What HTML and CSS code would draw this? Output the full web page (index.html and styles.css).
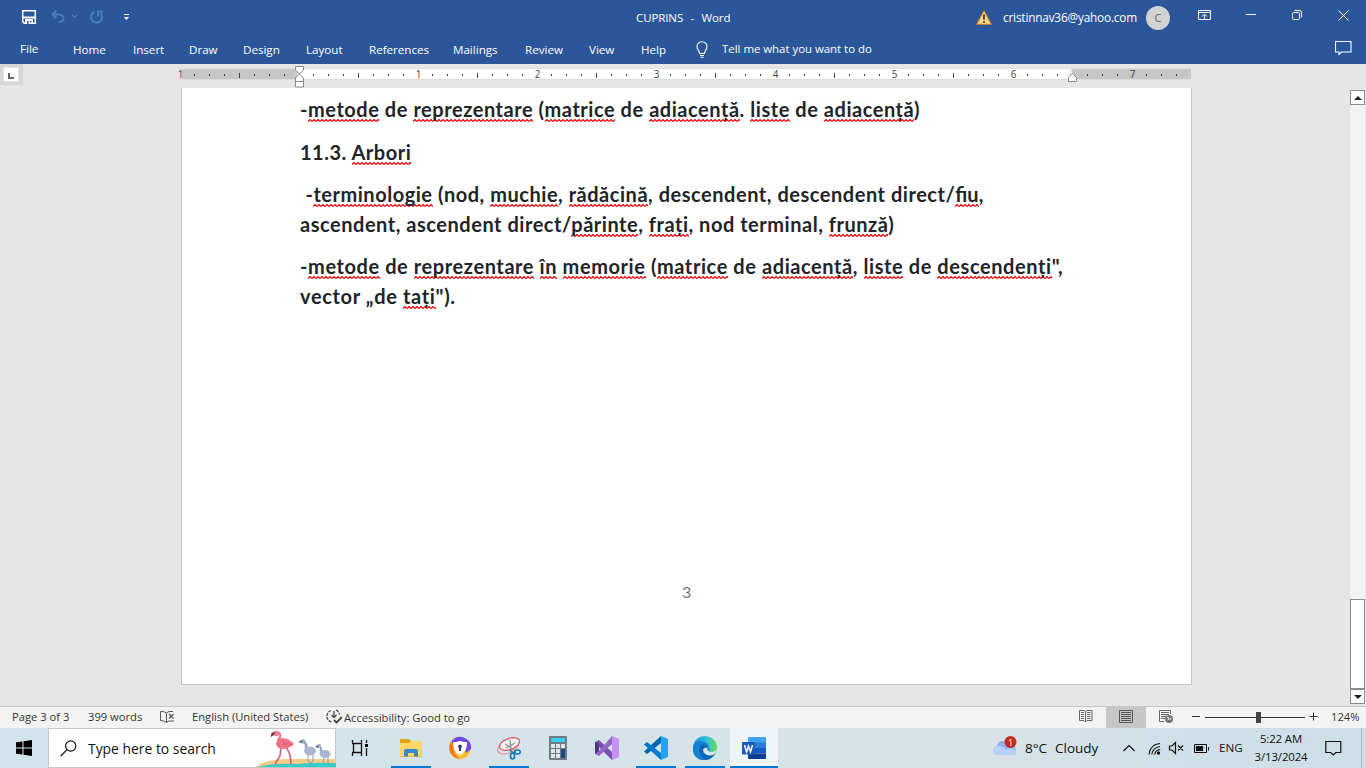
FILE: index.html
```html
<!DOCTYPE html>
<html lang="en">
<head>
<meta charset="utf-8">
<title>CUPRINS - Word</title>
<link rel="stylesheet" href="styles.css">
</head>
<body>
<div class="screen">
<header class="titlebar">
  <div class="quick">
    <svg width="116" height="20" viewBox="20 7 116 20" fill="none">
      <path d="M22.700 10.700h12.600v12.600H24.300l-1.600-1.600z" stroke="#fff" stroke-width="1.500"/><path d="M23 17.500h12" stroke="#fff" stroke-width="2"/><path d="M25 19h8v5h-8z" fill="#fff"/><path d="M27 21h1.500v3h-1.500zM30 21h1.500v1.500H30z" fill="#2b579a"/>
      <path d="M56.500 10.500l-4 4 4 4M52.500 14.500h6.500c6 0 6 7.500-.5 7.500" stroke="#4d7bb9" stroke-width="2"/>
      <path d="M72 15l2.500 2.500L77 15" stroke="#4d7bb9" stroke-width="1.200"/>
      <path d="M94.500 11.800a5.600 5.600 0 1 0 5.800 1M103 11.500h-5v5" stroke="#4d7bb9" stroke-width="2"/>
      <path d="M124 14.500h5" stroke="#fff"/><path d="M124 17h5l-2.500 3z" fill="#fff"/>
    </svg>
  </div>
  <div class="caption">CUPRINS&nbsp; -&nbsp; Word</div>
  <div class="account">
    <svg width="16" height="15" viewBox="0 0 16 15"><path d="M8 .5L15.300 14.300H.7z" fill="#fbd58b" stroke="#d9781e"/><path d="M8 4.500v5M8 11v1.700" stroke="#222" stroke-width="1.600"/></svg>
    <span class="mail">cristinnav36@yahoo.com</span>
    <span class="avatar">C</span>
  </div>
  <svg class="wincontrols" width="160" height="20" viewBox="1196 6 160 20" fill="none" stroke="#fff">
    <path d="M1198.500 10.500h12v9h-12zM1198.500 12.500h12M1204.500 19v-4M1202 16.500l2.500-2.500 2.500 2.500"/>
    <path d="M1246 14.500h10"/>
    <path d="M1292.500 13.500q0-1 1-1h5q1 0 1 1v5q0 1-1 1h-5q-1 0-1-1zM1294.500 10.500h5q2 0 2 2v5"/>
    <path d="M1338.500 10.500l10 10M1348.500 10.500l-10 10"/>
  </svg>
</header>
<nav class="ribbon">
  <span class="file">File</span><span>Home</span><span>Insert</span><span>Draw</span><span>Design</span><span>Layout</span><span>References</span><span>Mailings</span><span>Review</span><span>View</span><span>Help</span>
  <svg width="12" height="17" viewBox="0 0 12 17" fill="none" stroke="#fff" stroke-width="1.100"><path d="M3.500 12.500c0-3-2.500-3.500-2.500-7a5 4.700 0 0 1 10 0c0 3.500-2.500 4-2.500 7zM4 14.500h4M4.500 16.300h3"/></svg>
  <span class="tell">Tell me what you want to do</span>
  <svg class="comment" width="17" height="16" viewBox="0 0 17 16" fill="none" stroke="#fff" stroke-width="1.100"><path d="M.5 .5h15.500v10.500H6.500L4 13.500V11H.5z"/></svg>
</nav>
<main class="work">
  <div class="tabcorner"><span><svg width="6" height="6" viewBox="0 0 6 6"><path d="M1 0v5h5" fill="none" stroke="#666" stroke-width="2"/></svg></span></div>
  <div class="canvas">
    <svg class="ruler" width="1014" height="24" viewBox="178 64 1014 24">
      <path d="M182 69h115v10H182z" fill="#c6c6c6"/><path d="M1072 69h119v10h-119z" fill="#c6c6c6"/><path d="M299 69h771v10H299z" fill="#fff"/>
      <path d="M180 68.500h1011" stroke="#dedede"/><path d="M180 79.500h1011" stroke="#dcdcdc"/>
      <path d="M194.400 75h983" stroke="#444" stroke-width="2" stroke-dasharray="1 13.875" shape-rendering="crispEdges"/>
      <path d="M412 70h12v8h-12zM531 70h12v8h-12zM650 70h12v8h-12zM769 70h12v8h-12zM888 70h12v8h-12zM1007 70h12v8h-12z" fill="#fff"/><path d="M1126 70h12v8h-12z" fill="#c6c6c6"/>
      <path d="M239.500 73v5M358.500 73v5M477.500 73v5M596.500 73v5M715.500 73v5M834.500 73v5M953.500 73v5" stroke="#444"/>
      <g class="nums"><text x="180.500" y="78">1</text><text x="418.500" y="78">1</text><text x="537.500" y="78">2</text><text x="656.500" y="78">3</text><text x="775.500" y="78">4</text><text x="894.500" y="78">5</text><text x="1013.500" y="78">6</text><text x="1132.500" y="78">7</text></g>
      <path d="M295.500 66.500h8v3.500l-4 4 4 4v9h-8v-9l4-4-4-4zM295.500 81.500h8" fill="#fff" stroke="#8a8a8a"/>
      <path d="M1068.500 81.500v-4l4-4 4 4v4z" fill="#fff" stroke="#8a8a8a"/>
    </svg>
    <article class="page">
      <p class="l1">-<u>metode</u> de <u>reprezentare</u> (<u>matrice</u> de <u>adiacență</u>. <u>liste</u> de <u>adiacență</u>)</p>
      <p class="l2">11.3. <u>Arbori</u></p>
      <p><span class="l3">&nbsp;-<u>terminologie</u> (nod, <u>muchie</u>, <u>rădăcină</u>, descendent, descendent direct/<u class="lig">fiu</u>,</span><span class="l4">ascendent, ascendent direct/<u>părinte</u>, <u>frați</u>, nod terminal, <u>frunză</u>)</span></p>
      <p><span class="l5">-<u>metode</u> de <u>reprezentare</u> <u>în</u> <u>memorie</u> (<u>matrice</u> de <u>adiacență</u>, <u>liste</u> de <u>descendenți</u>",</span><span class="l6">vector „de <u>tați</u>").</span></p>
      <div class="pageno">3</div>
    </article>
  </div>
  <div class="scroll">
    <div class="sbtn"><svg width="8" height="4"><path d="M0 4h8L4 0z" fill="#222"/></svg></div>
    <div class="track"></div>
    <div class="thumb"></div>
    <div class="sbtn"><svg width="8" height="4"><path d="M0 0h8L4 4z" fill="#222"/></svg></div>
  </div>
</main>
<footer class="status">
  <span class="pg">Page 3 of 3</span><span class="wc">399 words</span>
  <svg width="16" height="14" viewBox="0 0 16 14" fill="none" stroke="#555"><path d="M6.500 3v9.500M6.500 3Q4 1 .5 1.500v9Q4 10.500 6.500 12.500 8 11 10 11M6.500 3Q8 1.500 10 1.500H13M10 11h4"/><path d="M9 4l4.500 4.500M13.500 4L9 8.500" stroke-width="1.300"/></svg>
  <span class="lang">English (United States)</span>
  <svg width="17" height="15" viewBox="0 0 17 15" fill="none" stroke="#444" stroke-width="1.300"><path d="M5 1.500A6 6 0 0 0 5.500 13M10 1a6 6 0 0 1 3.500 4.500" stroke-dasharray="3 1"/><path d="M8 2v6M5.500 6L8 8.500 10.500 6"/><path d="M8 11l2.500 2.500L16 8" stroke-width="1.800"/></svg>
  <span class="acc">Accessibility: Good to go</span>
  <svg class="read" width="14" height="13" viewBox="0 0 14 13" fill="none" stroke="#666"><path d="M.5 .5H5l1.500 1L8 .5h5v10H8L6.500 12 5 10.500H.5zM6.500 2v10M2 2.500h3M2 4.500h3M2 6.500h3M2 8.500h3M8 2.500h3.500M8 4.500h3.500M8 6.500h3.500M8 8.500h3.500"/></svg>
  <span class="layoutbtn"><svg width="14" height="13" viewBox="0 0 14 13" fill="none" stroke="#555"><path d="M.5.5h13v12H.5zM2 2.500h10M2 4.500h10M2 6.500h10M2 8.500h10M2 10.500h10"/></svg></span>
  <svg class="web" width="15" height="14" viewBox="0 0 15 14" fill="none" stroke="#666"><path d="M11.500 4V.5H.5v11H5M2 2.500h8M2 4.500h8M2 6.500h5M2 8.500h4"/><circle cx="10" cy="9" r="4" fill="#777" stroke="none"/><path d="M8 7l2 1-1 2M11 10l1-2" stroke="#eee"/></svg>
  <svg class="zoom" width="128" height="14" viewBox="1191 710 128 14"><path d="M1192 716.500h8M1309.500 716.500h8M1313.500 712.500v8M1205 717.500h100" stroke="#333"/><path d="M1256 712h5v11h-5z" fill="#444"/></svg>
  <span class="pct">124%</span>
</footer>
<div class="taskbar">
  <div class="start"><svg width="16" height="16" viewBox="0 0 16 16"><path d="M0 2.300l6.500-.9v6.100H0zM7.500 1.200L16 0v7.500H7.500zM0 8.500h6.500v6.100L0 13.700zM7.500 8.500H16V16l-8.500-1.200z"/></svg></div>
  <div class="search">
    <svg width="17" height="17" viewBox="0 0 17 17" fill="none" stroke="#111" stroke-width="1.200"><circle cx="10.700" cy="6" r="5.100"/><path d="M7 9.700L.8 16"/></svg>
    <span>Type here to search</span>
    <svg class="birds" width="80" height="37" viewBox="256 730 80 37" fill="none">
      <path d="M256 767q8-8 35-8h45v8z" fill="#f6cc86"/><path d="M258 767q15-4 40-3 14-2 38-1v4z" fill="#36cdc9"/>
      <path d="M281 747l-1 9-5 8M286 746l4 9 1 9" stroke="#dc5576" stroke-width="1.500"/>
      <path d="M276 733q5-1 4 4-3 4-1 8" stroke="#ef7c91" stroke-width="2.500"/><path d="M276 744q1-6 7-6 7 1 11 6-5 5-11 5-6 0-7-5z" fill="#ef7488"/><path d="M283 744q6-1 10 1" stroke="#dc5576"/><circle cx="276" cy="733.500" r="2.800" fill="#f47f94"/><path d="M275 732q-5 0-4 5l3-2z" fill="#654152"/>
      <path d="M308 753v8l3 2M313 753v8l-3 3M324 757l-1 6M328 757v7" stroke="#8e9ab6"/><path d="M303 741q4 2 3 8" stroke="#919fbe" stroke-width="2.500"/><ellipse cx="310" cy="751" rx="6" ry="4.500" fill="#aab5cf"/><circle cx="303" cy="741.500" r="2.300" fill="#9daac6"/><path d="M302 740l-4 2 4 1z" fill="#56647f"/>
      <path d="M319 746q3 2 2 7" stroke="#919fbe" stroke-width="2"/><ellipse cx="325" cy="754" rx="5.500" ry="4" fill="#aab5cf"/><circle cx="319" cy="746" r="2" fill="#9daac6"/><path d="M318 745l-3 2 3 1z" fill="#56647f"/>
    </svg>
  </div>
  <div class="tview"><svg width="17" height="16" viewBox="351 740 17 16" fill="none" stroke="#111" stroke-width="1.300"><path d="M352.500 740v2.500M361.500 740v2.500M352 743.500h10M353.500 743v9M361.500 743v9M352 752.500h10M352.500 753v3M361.500 753v3M366.500 740v3M366.500 748v8"/><path d="M365 744h3v3h-3z" fill="#111" stroke="none"/></svg></div>
  <div class="apps">
    <div class="app run"><svg width="22" height="20" viewBox="0 0 22 20"><path d="M0 1h9l2 2h11v16H0z" fill="#e1a317"/><path d="M0 5h9l2-2h11v15.500H0z" fill="#ffd668"/><path d="M4 18.500V13q0-2 2-2h10q2 0 2 2v5.500h-4V15H8v3.500z" fill="#328bd2"/></svg></div>
    <div class="app"><svg width="24" height="24" viewBox="0 0 24 24"><circle cx="12" cy="12" r="11" fill="#fbc02d"/><path d="M4 4.500A11 11 0 0 1 23 13L18 17Q17 8 4 4.500z" fill="#7046ed"/><path d="M9 1.500A11 11 0 0 0 12 23Q4 18 6 7z" fill="#f9761c"/><path d="M4 4.500Q8 1 12 1L10 7H4z" fill="#7046ed"/><path d="M12 6q3 1.500 6 1 0 8-6 11-6-3-6-11 3 .5 6-1z" fill="#fff" stroke="#fff" stroke-width="2" stroke-linejoin="round"/><path d="M12 8.500a2 2 0 0 1 1 3.700V15h-2v-2.800a2 2 0 0 1 1-3.700z" fill="#344364"/></svg></div>
    <div class="app run"><svg width="24" height="24" viewBox="0 0 24 24" fill="none"><ellipse cx="11" cy="11" rx="11" ry="6" transform="rotate(-23 11 11)" stroke="#e79294"/><ellipse cx="12.500" cy="8" rx="10.500" ry="5.500" transform="rotate(-20 12.500 8)" fill="#f3f4f4" stroke="#e55359" stroke-width="1.200"/><path d="M13 4l1 10M8 8l9 6M9 12l9-5" stroke="#8f9597" stroke-width="1.300"/><ellipse cx="15.500" cy="20" rx="2" ry="3" stroke="#167cc0" stroke-width="1.700"/><ellipse cx="20.500" cy="16" rx="2.800" ry="2" stroke="#167cc0" stroke-width="1.700"/><path d="M13 14l4 4" stroke="#167cc0" stroke-width="1.700"/></svg></div>
    <div class="app"><svg width="18" height="24" viewBox="0 0 18 24"><rect width="18" height="24" rx="1" fill="#707b83"/><path d="M2 2h14v4H2z" fill="#3bcdf5"/><path d="M2 8h4v4H2zM7 8h4v4H7zM12 8h4v4h-4zM2 13h4v4H2zM7 13h4v4H7zM2 18h4v4H2zM7 18h4v4H7z" fill="#e1e7e9"/><path d="M12 13h4v9h-4z" fill="#174a88"/></svg></div>
    <div class="app"><svg width="24" height="24" viewBox="0 0 24 24"><path d="M17 0l7 3v18l-7 3z" fill="#c590fa"/><path d="M0 6L4 4l13 12v8L4 11v7l-4-1z" fill="#7952ae"/><path d="M0 6l4 2v8l-4 2z" fill="#52327d"/><path d="M17 0v8L4 20l-4-2 4-3z" fill="#9466cc"/></svg></div>
    <div class="app run"><svg width="24" height="24" viewBox="0 0 24 24"><path d="M17 0l7 3v18l-7 3z" fill="#23a3f1"/><path d="M17 0v7L3 18 0 15.500z" fill="#0065a9"/><path d="M0 8.500L3 6l14 11v7z" fill="#007acc"/></svg></div>
    <div class="app run"><svg width="24" height="24" viewBox="0 0 24 24"><defs><linearGradient id="eg"><stop stop-color="#168cda"/><stop offset=".55" stop-color="#32bfe0"/><stop offset="1" stop-color="#65da55"/></linearGradient></defs><circle cx="12" cy="12" r="12" fill="url(#eg)"/><path d="M0 12Q1 6 8 7q7 1 6 6-3 0-4 2 1 5 8 4 3 0 4-1-5 7-12 6Q0 22 0 12z" fill="#0b65b8"/><path d="M14 13q1-3-1-4Q7 7 6 14q0 7 7 10-11 1-13-9-1-10 8-10 8 1 8 7 0 2 1 3h-3z" fill="#1681d1"/><path d="M10 14q1-3 4-2 0 3 4 4 4 0 6-3-1 4-4 6-8 2-10-5z" fill="#d9e7ed"/></svg></div>
    <div class="app active run"><svg width="24" height="22" viewBox="0 0 24 22"><path d="M7 0h16q1 0 1 1v5H6V1q0-1 1-1z" fill="#41a5ee"/><path d="M6 5.500h18V11H6z" fill="#2b7cd3"/><path d="M6 11h18v5.500H6z" fill="#185abd"/><path d="M6 16.500h18V21q0 1-1 1H7q-1 0-1-1z" fill="#103f91"/><rect y="5" width="13" height="12.500" rx="1" fill="#185abd"/><path d="M2.500 8l2 7L6.500 9l2 6 2-7" fill="none" stroke="#fff" stroke-width="1.500"/></svg></div>
  </div>
  <div class="tray">
    <svg class="cloud" width="26" height="22" viewBox="0 0 26 22"><path d="M6 19a5 5 0 0 1-1-9Q7 4 13 5q4 0 6 5 5 0 5 5 0 4-4 4z" fill="#8bb5f2"/><path d="M1 15q0-5 6-5 5 0 7 4 3-3 7-1 3 1 3 3 0 3-4 3H5q-4 0-4-4z" fill="#b6d1fa"/><circle cx="18.500" cy="6" r="6" fill="#c42b1c"/><text x="18.500" y="9.500" class="badge">1</text></svg>
    <span class="temp">8°C</span><span class="cloudy">Cloudy</span>
    <svg class="ticons" width="92" height="18" viewBox="1120 739 92 18" fill="none" stroke="#111" stroke-width="1.200">
      <path d="M1123.500 751l5.500-5.500 5.500 5.500"/>
      <path d="M1149 754.500q1-10 11-11M1151.800 754.500q1-7 8.200-8M1154.700 754.500q.5-4.500 5.500-5"/><circle cx="1158.500" cy="753" r="1.700" fill="#111" stroke="none"/>
      <path d="M1169.500 746v4h2.500l3.500 3.500v-11L1172 746zM1178 745.500l5 5M1183 745.500l-5 5"/>
      <path d="M1194.500 744.500h12v8h-12zM1208.500 747v3.500" stroke-width="1"/><path d="M1196.500 746.500h6v4h-6z" fill="#111"/>
    </svg>
    <span class="eng">ENG</span>
    <div class="clock"><span class="time">5:22 AM</span><span class="date">3/13/2024</span></div>
    <svg class="notif" width="17" height="17" viewBox="0 0 17 17" fill="none" stroke="#111" stroke-width="1.200"><path d="M.8 1.500h15v11h-5l-2.500 2.500-2.500-2.500h-5z"/></svg>
    <i class="peek"></i>
  </div>
</div>
</div>
</body>
</html>
```
FILE: styles.css
```css
* { box-sizing: border-box; }
body { margin: 0; overflow: hidden; font-family: "Open Sans", "Noto Sans", sans-serif; font-size: 12px; }
svg { display: block; flex: none; }
span { white-space: nowrap; }
.screen { width: 1366px; height: 768px; display: grid; grid-template-rows: 34px 30px 642px 22px 40px; background: #e6e6e6; overflow: hidden; }

.titlebar { background: #2b579a; color: #fff; display: grid; grid-template-columns: 636px 340px 220px 170px; }
.quick { padding: 7px 0 0 20px; }
.caption { line-height: 35px; font-size: 11.5px; letter-spacing: -.1px; word-spacing: .8px; white-space: nowrap; }
.account { display: flex; align-items: center; }
.mail { width: 154px; padding-left: 11px; line-height: 35px; font-size: 11.8px; letter-spacing: -.18px; }
.account .avatar { width: 24px; height: 24px; border-radius: 50%; background: #d2d2d2; color: #666; text-align: center; line-height: 24px; font-size: 11px; }
.wincontrols { margin-top: 6px; }

.ribbon { background: #2b579a; color: #fff; display: grid; grid-template-columns: 53px 60px 56px 54px 63px 63px 84px 72px 64px 52px 55px 26px 613px 17px; padding-left: 20px; line-height: 31px; font-size: 11.6px; }
.ribbon .file, .ribbon .tell { line-height: 29px; }
.ribbon .tell { font-size: 11.4px; }
.ribbon svg { margin-top: 7px; }

.work { display: grid; grid-template-columns: 178px 1172px 16px; background: #e6e6e6; }
.tabcorner { width: 23px; height: 21px; background: #d6d6d6; padding: 3px 4px 3px 3px; }
.tabcorner span { display: flex; width: 16px; height: 15px; background: #fff; border: 1px solid #e3e3e3; padding: 5px 0 0 4px; }
.nums { font: 10px "Open Sans", sans-serif; fill: #444; text-anchor: middle; }
.page { position: relative; margin-left: 3px; width: 1011px; height: 597px; background: #fff; border: solid #c6c6c6; border-width: 0 1px 1px; padding: 6px 0 0 118px; font: bold 20px/30px Lato, sans-serif; color: #212529; }
.page p { margin: 0 0 12px; white-space: nowrap; letter-spacing: .6px; }
.page p span { display: block; }
.page .l1 { letter-spacing: .54px; margin-bottom: 13px; }
.page .l2 { letter-spacing: .5px; }
.page .l3 { letter-spacing: .53px; }
.page .l4 { letter-spacing: .53px; }
.page .l5 { letter-spacing: .58px; }
.page .l6 { letter-spacing: .65px; }
.page .lig { letter-spacing: 0; }
.page u { text-decoration: none; padding-bottom: 1px; background: url("data:image/svg+xml,%3Csvg xmlns='http://www.w3.org/2000/svg' width='4' height='3'%3E%3Cpath d='M0 2.500L2 .5 4 2.500' fill='none' stroke='%23f00000' stroke-width='1.200'/%3E%3C/svg%3E") repeat-x left bottom; }
.pageno { position: absolute; top: 489px; left: 500px; font: 16px/30px Lato, sans-serif; color: #777; }

.scroll { padding-top: 26px; display: grid; grid-template-rows: 15px 494px 90px 15px; width: 15px; }
.sbtn, .thumb { background: #fff; border: 1px solid #8c8c8c; }
.sbtn { display: grid; place-items: center; }
.track { background: #f3f3f3; }

.status { background: #f3f3f3; border-top: 1px solid #c6c6c6; display: grid; grid-template-columns: 76px 72px 32px 134px 18px 735px 27px 40px 45px 140px 35px; grid-template-rows: 19px; padding-left: 12px; align-items: center; color: #333; font-size: 11.2px; line-height: 18px; }
.status .pg, .status .wc, .status .lang, .status .pct { margin-top: 1px; }
.status .acc { padding-top: 3px; }
.layoutbtn { background: #c6c6c6; height: 21px; padding-bottom: 2px; margin-bottom: -2px; display: grid; place-items: center; align-self: start; }
.status .web { margin-left: 13px; }

.taskbar { background: linear-gradient(90deg, #d1e3ec, #d5e4e9 45%, #d9e2e6 72%, #cfe0e8 85%, #cddfe6); display: grid; grid-template-columns: 48px 288px 51px 600px 379px; color: #111; }
.start { display: grid; place-items: center; }
.search { background: #fff; border: 1px solid #bfc5c8; display: grid; grid-template-columns: 28px 168px 80px; padding-left: 11px; align-items: center; font-size: 13.9px; }
.search .birds { align-self: end; }
.tview { padding: 12px 0 0 15px; }
.apps { display: flex; gap: 1px; }
.app { width: 48px; height: 40px; display: grid; place-items: center; background: linear-gradient(#0078d7, #0078d7) no-repeat center bottom / 0 2px; }
.app.run { background-size: 40px 2px; }
.app.active { background-color: #eef4f7; background-size: 48px 2px; }
.tray { display: grid; grid-template-columns: 38px 30px 65px 99px 36px 52px 54px 1px; align-items: center; }
.cloud { margin: -3px 0 0 5px; }
.badge { font: 9px "Open Sans", sans-serif; fill: #fff; text-anchor: middle; }
.temp, .cloudy { font-size: 13.500px; }
.eng { font-size: 11.6px; margin-top: -1px; }
.clock { display: flex; flex-direction: column; align-items: center; line-height: 18px; font-size: 11.4px; letter-spacing: -.1px; }
.notif { margin-left: 18px; }
.peek { height: 40px; background: #a9b6bc; }
```
